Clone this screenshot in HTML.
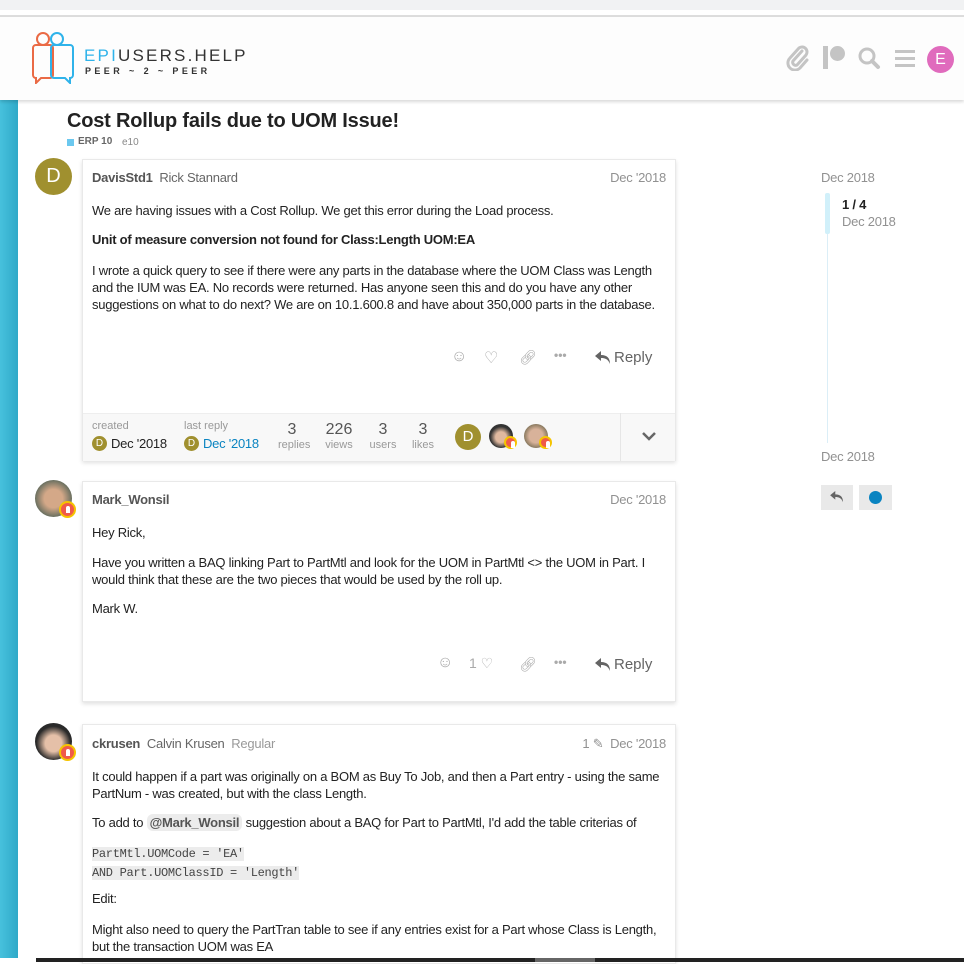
<!DOCTYPE html>
<html><head><meta charset="utf-8"><style>
*{margin:0;padding:0;box-sizing:border-box}
body{width:964px;height:962px;overflow:hidden;background:#fff;font-family:"Liberation Sans",Arial,sans-serif;color:#222;position:relative}
.a{position:absolute;white-space:nowrap}
.t{font-size:13px;letter-spacing:-0.25px;color:#222}
.g{color:#919191}
.card{position:absolute;left:82px;width:594px;background:#fff;border:1px solid #e9e9e9;box-shadow:0 2px 4px rgba(0,0,0,.12)}
.av{position:absolute;width:37px;height:37px;border-radius:50%}
.badge{position:absolute;width:17px;height:17px;border-radius:50%;background:#f05a4a;border:2px solid #f5c400}
.badge::after{content:"";position:absolute;left:5px;top:3px;width:4px;height:7px;background:#fff;border-radius:2px 2px 0 0}
.mono{font-family:"Liberation Mono",monospace;font-size:12px;background:#ececec;color:#444;letter-spacing:-0.3px}
</style></head><body>
<div class="a" style="left:0;top:0;width:964px;height:10px;background:#f1f2f3"></div>
<div class="a" style="left:0;top:15px;width:964px;height:2px;background:#ddd"></div>
<div class="a" style="left:0;top:17px;width:964px;height:83px;background:#fdfdfd;box-shadow:0 2px 3px rgba(0,0,0,.15);z-index:2"></div>
<!-- logo -->
<svg class="a" style="left:32px;top:32px;z-index:3" width="44" height="52" viewBox="0 0 44 52">
<path d="M11 1a6 6 0 0 1 0 12a6 6 0 0 1 0-12zM5 13h13a3 3 0 0 1 3 3v27a3 3 0 0 1-3 3H9l-5 5v-5a3 3 0 0 1-3-3V16a3 3 0 0 1 3-3z" fill="none" stroke="#ea6a45" stroke-width="2"/>
<path d="M25 1a6 6 0 0 1 0 12a6 6 0 0 1 0-12zM22 13h16a3 3 0 0 1 3 3v27a3 3 0 0 1-3 3v5l-5-5H22a3 3 0 0 1-3-3V16a3 3 0 0 1 3-3z" fill="none" stroke="#2fb3ea" stroke-width="2"/>
</svg>
<div class="a" style="left:84px;top:46px;font-size:17px;letter-spacing:2.2px;z-index:3;color:#333"><span style="color:#2fb3ea">EPI</span>USERS.HELP</div>
<div class="a" style="left:85px;top:66px;font-size:9px;font-weight:bold;letter-spacing:3.4px;z-index:3;color:#333">PEER ~ 2 ~ PEER</div>
<!-- header icons -->
<svg class="a" style="left:786px;top:45px;z-index:3" width="24" height="26" viewBox="0 0 24 26"><path d="M16 6L7 16a3 3 0 0 0 4 4l9-10a5 5 0 0 0-7-7L4 13a7 7 0 0 0 10 10l7-8" fill="none" stroke="#c4c4c4" stroke-width="3" stroke-linecap="round"/></svg>
<div class="a" style="left:823px;top:46px;width:5px;height:23px;background:#c4c4c4;z-index:3"></div>
<div class="a" style="left:830px;top:46px;width:15px;height:15px;border-radius:50%;background:#c4c4c4;z-index:3"></div>
<svg class="a" style="left:857px;top:46px;z-index:3" width="24" height="24" viewBox="0 0 24 24"><circle cx="10" cy="10" r="7" fill="none" stroke="#c4c4c4" stroke-width="3"/><path d="M15 15l6 6" stroke="#c4c4c4" stroke-width="4" stroke-linecap="round"/></svg>
<div class="a" style="left:895px;top:50px;width:20px;height:3px;background:#c4c4c4;z-index:3;box-shadow:0 7px 0 #c4c4c4,0 14px 0 #c4c4c4"></div>
<div class="a" style="left:927px;top:46px;width:27px;height:27px;border-radius:50%;background:#e06bbd;color:#fff;font-size:16px;text-align:center;line-height:27px;z-index:3">E</div>
<!-- teal bar -->
<div class="a" style="left:0;top:100px;width:18px;height:858px;background:linear-gradient(90deg,#47c1dd,#2fa9c8)"></div>
<div class="a" style="left:36px;top:958px;width:928px;height:4px;background:#222;z-index:5"></div>
<div class="a" style="left:535px;top:958px;width:60px;height:4px;background:#666;z-index:5"></div>
<!-- title -->
<div class="a" style="left:67px;top:110px;font-size:20px;font-weight:bold;color:#222;letter-spacing:-0.2px">Cost Rollup fails due to UOM Issue!</div>
<div class="a" style="left:67px;top:139px;width:7px;height:7px;background:#6bc8ef"></div>
<div class="a" style="left:78px;top:136px;font-size:10px;font-weight:bold;color:#666">ERP 10</div>
<div class="a" style="left:122px;top:137px;font-size:10px;color:#888">e10</div>

<!-- post 1 -->
<div class="av" style="left:35px;top:158px;background:#a0902f;color:#fff;font-size:20px;text-align:center;line-height:37px">D</div>
<div class="card" style="top:159px;height:302px">
<div class="a t" style="left:9px;top:10px;font-weight:bold;color:#555">DavisStd1 <span style="font-weight:normal;color:#666">&nbsp;Rick Stannard</span></div>
<div class="a t g" style="right:9px;top:10px">Dec '2018</div>
<div class="a t" style="left:9px;top:43px">We are having issues with a Cost Rollup. We get this error during the Load process.</div>
<div class="a t" style="left:9px;top:72px;font-weight:bold">Unit of measure conversion not found for Class:Length UOM:EA</div>
<div class="a t" style="left:9px;top:102px;line-height:17px">I wrote a quick query to see if there were any parts in the database where the UOM Class was Length<br>and the IUM was EA. No records were returned. Has anyone seen this and do you have any other<br>suggestions on what to do next? We are on 10.1.600.8 and have about 350,000 parts in the database.</div>
<div class="a" style="left:368px;top:188px;font-size:16px;color:#aaa">☺</div>
<div class="a" style="left:401px;top:188px;font-size:16px;color:#aaa">♡</div>
<div class="a" style="left:436px;top:189px;font-size:14px;color:#aaa">🔗︎</div>
<div class="a" style="left:471px;top:188px;font-size:12px;color:#aaa;font-weight:bold">•••</div>
<svg class="a" style="left:512px;top:191px" width="16" height="14" viewBox="0 0 16 14"><path d="M6 0L0 5l6 5V7c4 0 7 1 9 6c0-6-3-9-9-9z" fill="#646464"/></svg>
<div class="a" style="left:531px;top:189px;font-size:15px;color:#646464">Reply</div>
<div class="a" style="left:0;top:253px;width:592px;height:48px;background:#f8f8f8;border-top:1px solid #eee"></div>
<div class="a" style="left:537px;top:253px;width:1px;height:48px;background:#e6e6e6"></div>
<svg class="a" style="left:559px;top:272px" width="14" height="10" viewBox="0 0 14 10"><path d="M1 1l6 6 6-6" fill="none" stroke="#666" stroke-width="2.5"/></svg>
<div class="a" style="left:9px;top:260px;font-size:11px;color:#999">created</div>
<div class="a" style="left:9px;top:276px;width:15px;height:15px;border-radius:50%;background:#a0902f;color:#fff;font-size:10px;text-align:center;line-height:15px">D</div>
<div class="a t" style="left:28px;top:276px">Dec '2018</div>
<div class="a" style="left:101px;top:260px;font-size:11px;color:#999">last reply</div>
<div class="a" style="left:101px;top:276px;width:15px;height:15px;border-radius:50%;background:#a0902f;color:#fff;font-size:10px;text-align:center;line-height:15px">D</div>
<div class="a t" style="left:120px;top:276px;color:#0a84c1">Dec '2018</div>
<div class="a" style="left:195px;top:261px;width:28px;text-align:center;font-size:16px;color:#555">3<div style="font-size:11px;color:#999">replies</div></div>
<div class="a" style="left:238px;top:261px;width:36px;text-align:center;font-size:16px;color:#555">226<div style="font-size:11px;color:#999">views</div></div>
<div class="a" style="left:284px;top:261px;width:32px;text-align:center;font-size:16px;color:#555">3<div style="font-size:11px;color:#999">users</div></div>
<div class="a" style="left:326px;top:261px;width:28px;text-align:center;font-size:16px;color:#555">3<div style="font-size:11px;color:#999">likes</div></div>
<div class="a" style="left:372px;top:264px;width:26px;height:26px;border-radius:50%;background:#a0902f;color:#fff;font-size:15px;text-align:center;line-height:26px">D</div>
<div class="a" style="left:406px;top:264px;width:24px;height:24px;border-radius:50%;background:radial-gradient(circle at 50% 55%,#e0b9a0 30%,#333 60%)"></div>
<div class="badge" style="left:421px;top:276px;width:13px;height:13px"></div>
<div class="a" style="left:441px;top:264px;width:24px;height:24px;border-radius:50%;background:radial-gradient(circle at 50% 50%,#d8b29a 40%,#8a7a60 70%)"></div>
<div class="badge" style="left:456px;top:276px;width:13px;height:13px"></div>
</div>

<!-- post 2 -->
<div class="av" style="left:35px;top:480px;background:radial-gradient(circle at 50% 50%,#d4a888 35%,#6b7060 70%)"></div>
<div class="badge" style="left:59px;top:501px"></div>
<div class="card" style="top:481px;height:221px">
<div class="a t" style="left:9px;top:10px;font-weight:bold;color:#555">Mark_Wonsil</div>
<div class="a t g" style="right:9px;top:10px">Dec '2018</div>
<div class="a t" style="left:9px;top:43px">Hey Rick,</div>
<div class="a t" style="left:9px;top:72px;line-height:17px">Have you written a BAQ linking Part to PartMtl and look for the UOM in PartMtl &lt;&gt; the UOM in Part. I<br>would think that these are the two pieces that would be used by the roll up.</div>
<div class="a t" style="left:9px;top:119px">Mark W.</div>
<div class="a" style="left:354px;top:172px;font-size:16px;color:#aaa">☺</div>
<div class="a" style="left:386px;top:173px;font-size:14px;color:#aaa">1 ♡</div>
<div class="a" style="left:436px;top:174px;font-size:14px;color:#aaa">🔗︎</div>
<div class="a" style="left:471px;top:173px;font-size:12px;color:#aaa;font-weight:bold">•••</div>
<svg class="a" style="left:512px;top:176px" width="16" height="14" viewBox="0 0 16 14"><path d="M6 0L0 5l6 5V7c4 0 7 1 9 6c0-6-3-9-9-9z" fill="#646464"/></svg>
<div class="a" style="left:531px;top:174px;font-size:15px;color:#646464">Reply</div>
</div>

<!-- post 3 -->
<div class="av" style="left:35px;top:723px;background:radial-gradient(circle at 50% 55%,#e5c0a8 30%,#2a2a2a 62%)"></div>
<div class="badge" style="left:59px;top:744px"></div>
<div class="card" style="top:724px;height:240px">
<div class="a t" style="left:9px;top:11px;font-weight:bold;color:#555">ckrusen <span style="font-weight:normal;color:#666">&nbsp;Calvin Krusen&nbsp;</span> <span style="font-weight:normal;color:#999">Regular</span></div>
<div class="a t g" style="right:9px;top:11px">1 ✎ &nbsp;Dec '2018</div>
<div class="a t" style="left:9px;top:43px;line-height:17px">It could happen if a part was originally on a BOM as Buy To Job, and then a Part entry - using the same<br>PartNum - was created, but with the class Length.</div>
<div class="a t" style="left:9px;top:90px">To add to <span style="background:#ececec;color:#555;font-weight:bold;padding:1px 3px;border-radius:6px">@Mark_Wonsil</span> suggestion about a BAQ for Part to PartMtl, I'd add the table criterias of</div>
<div class="a" style="left:9px;top:119px;line-height:17px"><span class="mono">PartMtl.UOMCode = 'EA'</span><br><span class="mono">AND Part.UOMClassID = 'Length'</span></div>
<div class="a t" style="left:9px;top:166px">Edit:</div>
<div class="a t" style="left:9px;top:196px;line-height:17px">Might also need to query the PartTran table to see if any entries exist for a Part whose Class is Length,<br>but the transaction UOM was EA</div>
</div>

<!-- timeline -->
<div class="a t g" style="left:821px;top:170px">Dec 2018</div>
<div class="a" style="left:827px;top:234px;width:1px;height:209px;background:#dbeef7"></div>
<div class="a" style="left:825px;top:193px;width:5px;height:41px;background:#d1f0fa;border-radius:2px"></div>
<div class="a t" style="left:842px;top:197px;font-weight:bold">1 / 4</div>
<div class="a t g" style="left:842px;top:214px">Dec 2018</div>
<div class="a t g" style="left:821px;top:449px">Dec 2018</div>
<div class="a" style="left:821px;top:485px;width:32px;height:25px;background:#e9e9e9"></div>
<svg class="a" style="left:830px;top:491px" width="14" height="12" viewBox="0 0 16 14"><path d="M6 0L0 5l6 5V7c4 0 7 1 9 6c0-6-3-9-9-9z" fill="#646464"/></svg>
<div class="a" style="left:859px;top:485px;width:33px;height:25px;background:#e9e9e9"></div>
<div class="a" style="left:869px;top:491px;width:13px;height:13px;border-radius:50%;background:#0a84c1"></div>
</body></html>
